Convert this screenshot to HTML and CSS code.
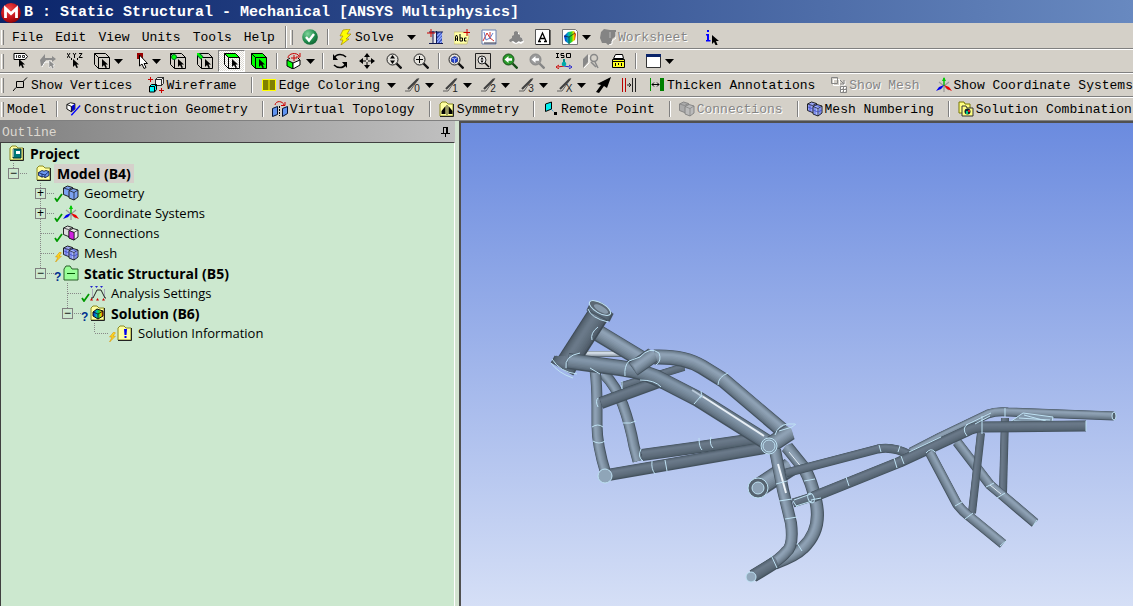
FILE: index.html
```html
<!DOCTYPE html>
<html lang="en">
<head>
<meta charset="utf-8">
<title>B : Static Structural - Mechanical [ANSYS Multiphysics]</title>
<link rel="stylesheet" href="styles.css">
</head>
<body>
<svg class="sprite" aria-hidden="true">
  <defs>
    <radialGradient id="red" cx=".4" cy=".3" r=".8"><stop offset="0" stop-color="#f04848"/><stop offset=".6" stop-color="#c01018"/><stop offset="1" stop-color="#700"/></radialGradient>
    <radialGradient id="grn" cx=".35" cy=".3" r=".8"><stop offset="0" stop-color="#7fd59a"/><stop offset=".6" stop-color="#1f8a4c"/><stop offset="1" stop-color="#0c5c2c"/></radialGradient>
    <linearGradient id="rain"><stop offset="0" stop-color="#0020e0"/><stop offset=".35" stop-color="#00b0c0"/><stop offset=".6" stop-color="#20d020"/><stop offset=".8" stop-color="#e8e000"/><stop offset="1" stop-color="#e00000"/></linearGradient>
  </defs>
  <symbol id="logo" viewBox="0 0 20 20"><circle cx="10" cy="10" r="10" fill="url(#red)"/><path d="M4.500 15V5.500l5.500 5 5.500-5V15" fill="none" stroke="#fff" stroke-width="2.800"/></symbol>
  <symbol id="check" viewBox="0 0 16 16"><circle cx="8" cy="8" r="7.800" fill="url(#grn)"/><path d="M4 8l3 3.500 5-6.500" fill="none" stroke="#fff" stroke-width="2.400"/></symbol>
  <symbol id="bolt" viewBox="0 0 16 16"><path d="M6 1l7-1-3 5h4L9 10h3L4 16l2-5H3l3-4H3z" fill="#ff0" stroke="#a88c00" stroke-width=".7"/></symbol>
  <symbol id="section" viewBox="0 0 16 16"><path d="M6 3h9v12H6z" fill="#3048b0"/><path d="M10 7l4-4M10 11l5-6M10 14l5-6M13 14l2-2" stroke="#90a8ff" stroke-width="1.300"/><path d="M6 3h3v11H6z" fill="#e8e8f0"/><path d="M6 2v13M9.500 2v13M2 3h14M2 14.500h14" fill="none" stroke="#101850"/><path d="M4 0v8M0 4h8" stroke="#c00"/></symbol>
  <symbol id="abc" viewBox="0 0 16 16"><path d="M0 3h12l3 4-2 8H0z" fill="#ffffa8" stroke="#b8b060" stroke-width=".6"/><path d="M1.500 12V8l1-2 1 2v4M1.500 10h2M6 5v7h2.500V9H6M12.500 9h-2v3h2" fill="none" stroke="#000"/><path d="M13 0v7M9.500 3.500H16" stroke="#c00"/></symbol>
  <symbol id="chart" viewBox="0 0 16 16"><path d="M1 1h14v14H1z" fill="#fff" stroke="#6880b0"/><path d="M2 12L6 4l3 5 4 3M9 3v7" fill="none" stroke="#d03030"/><path d="M3 3l2 8 4-2 3-5" fill="none" stroke="#6080d0"/><path d="M3 14h12" stroke="#334"/></symbol>
  <symbol id="cloud" viewBox="0 0 16 16"><path d="M9 3l2 1v3l3 2 2 4-3 2-2-1-3 1-3-1-2-3 3-3 2-1z" fill="#fff"/><path d="M8 2l2 1v2l2 1v2l2 1 1 3-3 1-1-1-3 2-3-2-3 1-1-2 3-2V7l2-1V3z" fill="#858585"/></symbol>
  <symbol id="lettera" viewBox="0 0 16 16"><path d="M.5.500h14v15H.5z" fill="#fff" stroke="#555"/><path d="M15 1v15H1" fill="none" stroke="#000"/><path d="M4 12L7.500 4 11 12M5 9.500h5M3 12.500h3M9 12.500h3" fill="none" stroke="#000" stroke-width="1.300"/></symbol>
  <symbol id="colors" viewBox="0 0 16 16"><path d="M.5.500h13l2 2v13H.5z" fill="#fff" stroke="#777"/><path d="M2 7l4-4 6-1 2 3-1 6-6 4-4-3z" fill="url(#rain)"/><path d="M2 7l5 1 6-4M7 8v7" fill="none" stroke="#123" stroke-width=".7"/></symbol>
  <symbol id="wsheet" viewBox="0 0 16 16"><path d="M1 3l3-3 6 1h6v6l-4 3v4l-4 2-2-2H2L0 9z" fill="#848484"/><path d="M16 3v6l-4 3v3l-3 1" fill="none" stroke="#fff"/><path d="M10 3v6" stroke="#bbb"/></symbol>
  <symbol id="info" viewBox="0 0 20 16"><path d="M8 1h2v2H8zM7 5h3v6h1.500v1.500H7V11h1V6.500H7z" fill="#00f"/><path d="M13 6v9l2-2 2 4h2l-2-5h3z" fill="#000"/></symbol>
  <symbol id="ptr" viewBox="0 0 16 16"><path d="M0 0v8l2-2 1.500 3L5 8.500 3.500 5.500H6z" fill="#000"/></symbol>
  <symbol id="tag" viewBox="0 0 16 16"><path d="M1 .5h11l2.500 3-2.500 3H1z" fill="#fff" stroke="#000"/><path d="M3.500 2v3M5.500 2.500h2v2h-2zM9.500 2.500h2v2h-2z" fill="none" stroke="#000" stroke-width=".8"/><use href="#ptr" x="6" y="6"/></symbol>
  <symbol id="probe" viewBox="0 0 16 16"><path d="M0 7l5-6v4h7V3l4 3-4 3V7H6l-3 6H1z" fill="#8c8c8c"/><path d="M2 14l3-5h7" fill="none" stroke="#fff"/><path d="M9 7v8l2-2 1 3 2-1-1-3h2z" fill="#8c8c8c" stroke="#fff" stroke-width=".5"/></symbol>
  <symbol id="xyz" viewBox="0 0 16 16"><path d="M0 0l3 5M3 0L0 5M4.500 5v2M6 0l1.500 2L9 0M7.500 2v3M10.500 5v2M12 .5h3L12 4.500h3.500" fill="none" stroke="#000"/><use href="#ptr" x="6" y="6"/></symbol>
  <symbol id="selbox" viewBox="0 0 16 16"><path d="M.5.500h11l4 4h-11z" fill="var(--top,none)"/><path d="M.5.500l4 4v11l-4-4z" fill="var(--side,none)"/><path d="M4.500 4.500h11v11h-11z" fill="var(--front,none)"/><path d="M.5.500h11l4 4v11h-11l-4-4zM.5.500l4 4h11M4.500 4.500v11" fill="none" stroke="#000"/><use href="#ptr" x="8" y="6"/></symbol>
  <symbol id="selvert" viewBox="0 0 16 16"><use href="#selbox"/><circle cx="4" cy="4" r="2.500" fill="#0f0" stroke="#063"/></symbol>
  <symbol id="seledge" viewBox="0 0 16 16"><use href="#selbox"/><path d="M0 0l5 5" stroke="#063" stroke-width="4"/><path d="M0 0l5 5" stroke="#0f0" stroke-width="2"/></symbol>
  <symbol id="redptr" viewBox="0 0 16 16"><path d="M5 0h6v6H5z" fill="#900"/><path d="M7.500 2v11l2.500-2 2 4.500 2-1-2-4h3.500z" fill="#fff" stroke="#000"/></symbol>
  <symbol id="view" viewBox="0 0 16 16"><path d="M1 7l6 3v6l-6-3z" fill="#0f0" stroke="#000"/><path d="M7 10l7-3v5l-7 4zM1 7l3-2M14 7l-2-2" fill="#fff" stroke="#000"/><path d="M2 5c0-5 9-6 11-2M14 0v4h-4M8 2v6M5 5h6" fill="none" stroke="#c00"/></symbol>
  <symbol id="rotate" viewBox="0 0 16 16"><path d="M2 5c3-5 9-4 12-1M14 11c-3 5-9 4-12 1" fill="none" stroke="#000" stroke-width="1.600"/><path d="M1 1v6h5zM15 15V9h-5z" fill="#000"/></symbol>
  <symbol id="pan" viewBox="0 0 16 16"><path d="M8 0l3 4H5zM8 16l3-4H5zM0 8l4-3v6zM16 8l-4-3v6z"/><path d="M8 3v4M8 9v4M3 8h4M9 8h4" stroke="#000"/></symbol>
  <symbol id="lens" viewBox="0 0 16 16"><circle cx="6.500" cy="6.500" r="5.500" fill="var(--glass,#e4e2dc)" stroke="var(--rim,#222)"/><path d="M10.500 10.500l5 5" stroke="var(--rim,#111)" stroke-width="2.400"/></symbol>
  <symbol id="zoomud" viewBox="0 0 16 16"><use href="#lens"/><path d="M6.500 2L9 5.500H4zM6.500 11L9 7.500H4z"/></symbol>
  <symbol id="zoomin" viewBox="0 0 16 16"><use href="#lens"/><path d="M6.500 3v7M3 6.500h7" stroke="#000"/></symbol>
  <symbol id="zoomfit" viewBox="0 0 16 16"><use href="#lens"/><path d="M3.500 5l3-1.500 3 1v4l-3 1.500-3-1.500z" fill="#2040d0" stroke="#001060" stroke-width=".6"/><path d="M3.500 5l3 1 3-1.500M6.500 6v4" fill="none" stroke="#fff" stroke-width=".6"/></symbol>
  <symbol id="zoombox" viewBox="0 0 16 16"><path d="M.5.500h15v15H.5z" fill="none" stroke="#222"/><circle cx="7" cy="7" r="4" fill="#eee" stroke="#222"/><path d="M10 10l4 4" stroke="#000" stroke-width="1.500"/><path d="M7 4l1.500 2.500h-3zM7 10l1.500-2.500h-3z"/></symbol>
  <symbol id="zoomarrow" viewBox="0 0 16 16"><use href="#lens"/><path d="M2.500 6.500l4-3.500v2.200H10v2.600H6.500V10z" fill="#fff"/></symbol>
  <symbol id="iso" viewBox="0 0 16 16"><path d="M1.500 0v5M0 .5h3M0 4.500h3M8 .5H5v2h3v2H5M10.500.500h4v4h-4z" fill="none" stroke="#000"/><path d="M8 6v6" stroke="#088" stroke-width="2"/><path d="M8 13l-6 1M3 12l-3 2 3 2" fill="none" stroke="#c00"/><path d="M8 13l6 1M13 12l3 2-3 2" fill="none" stroke="#22c"/><circle cx="8" cy="11" r="2.300" fill="#0aa"/></symbol>
  <symbol id="look" viewBox="0 0 16 16"><path d="M0 6l5-5v8l-5 6z" fill="#888"/><path d="M6 2v8l-5 5" fill="none" stroke="#fff"/><circle cx="11" cy="5" r="3.500" fill="none" stroke="#888" stroke-width="1.500"/><path d="M12 9l3 6M8 9l5 5" stroke="#888" stroke-width="1.500"/></symbol>
  <symbol id="ruler" viewBox="0 0 16 16"><path d="M5.500 1.500h7l1 4h-10z" fill="#fff" stroke="#000"/><path d="M2.500 6.500h12v8h-12z" fill="#ffff20" stroke="#000"/><path d="M3 8.500h11M5.500 10v3M8.500 10v2M11.500 10v3" stroke="#000"/></symbol>
  <symbol id="window" viewBox="0 0 16 16"><path d="M1.500 1.500h14v13h-14z" fill="#fff" stroke="#333"/><path d="M1 1h15v3H1z" fill="#0a246a"/></symbol>
  <symbol id="verts" viewBox="0 0 16 16"><path d="M3.500 4.500h7v6h-7zM10 4.500l4-4M3 10.500L0 14" fill="none" stroke="#000"/></symbol>
  <symbol id="wire" viewBox="0 0 16 16"><path d="M7.500 2.500l2-2h6v6l-2 2h-6zM7.500 2.500h6v6M13.500 2.500l2-2" fill="#eee" stroke="#000" stroke-width=".8"/><path d="M1.500 9.500l2-2h5v5l-2 2.500h-5z" fill="#0ff" stroke="#000"/><path d="M1.500 9.500h5v5.500M6.500 9.500l2-2" fill="none" stroke="#000"/><path d="M0 2.500h5M2.500 0v5M11 13.500h5M13.500 11v5" stroke="#c00"/></symbol>
  <symbol id="edgecol" viewBox="0 0 16 16"><path d="M1 2h14v12H1z" fill="#ff0"/><path d="M2 3h5.500v10H2zM8.500 3H14v10H8.500z" fill="#808000"/></symbol>
  <symbol id="pen" viewBox="0 0 16 16"><path d="M0 14h5L14 1" fill="none" stroke="#444" stroke-width=".8"/><path d="M3 12L13 2" stroke="#404040" stroke-width="2.200"/></symbol>
  <symbol id="arrowne" viewBox="0 0 16 16"><path d="M16 0l-4 11-3-2-5 7-3-1 5-7-4-1z"/></symbol>
  <symbol id="gap" viewBox="0 0 16 16"><path d="M.5 1v14M3.500 1v14" stroke="#b00"/><path d="M10.500 1v14M13.500 1v14M5 8h4M7 6l2 2-2 2" fill="none" stroke="#222"/></symbol>
  <symbol id="thick" viewBox="0 0 16 16"><path d="M1.500 1v13" stroke="#090"/><path d="M11 1h4v13h-4z" fill="#008000"/><path d="M3 7.500h7M5 5.500l-2 2 2 2M8 5.500l2 2-2 2" fill="none" stroke="#000"/></symbol>
  <symbol id="smesh" viewBox="0 0 16 16"><path d="M1.500 1.500h6v6h-6zM9.500 9.500h6v6h-6zM12.500 9.500v6M9.500 12.500h6M9 3l4 4M13 3v4H9" fill="none" stroke="#fff" transform="translate(1 1)"/><path d="M.5.500h6v6h-6zM9.500 9.500h6v6h-6zM12.500 9.500v6M9.500 12.500h6M9 3l4 4M13 3v4H9" fill="none" stroke="#858585"/></symbol>
  <symbol id="axes" viewBox="0 0 16 16"><path d="M3 5l10 8M13 5L4 12M8 9v6" stroke="#999" stroke-width="1.200"/><path d="M8 9V1" stroke="#0b0" stroke-width="1.400"/><path d="M8 0l2 4H6z" fill="#0c0"/><path d="M8 8l-3 4-5 2 3-4z" fill="#00e"/><path d="M8 8l3 4 5 2-3-4z" fill="#e00"/></symbol>
  <symbol id="cgeom" viewBox="0 0 18 16"><path d="M1 3l4-2 5 1v6l-4 3-5-3z" fill="#fff" stroke="#000"/><path d="M6 5l4-3v6l-4 3z" fill="#00c"/><path d="M1 3l5 2v6" fill="none" stroke="#000"/><path d="M6 15L16 4" stroke="#00f" stroke-width="1.500"/></symbol>
  <symbol id="vtopo" viewBox="0 0 16 16"><path d="M.5 7.500l5-2v8l-5 2zM10.500 7.500l5-2v7l-5 3z" fill="#5f92ee" stroke="#001030"/><path d="M7.500 5v10" stroke="#000" stroke-dasharray="2 1"/><path d="M3 4c1-5 8-4 9 0M13 1v3.500H9" fill="none" stroke="#c00"/></symbol>
  <symbol id="folder" viewBox="0 0 16 16"><path d="M1 3l2-2h4l2 2h5v12H1z" fill="#ffffa0" stroke="#8a8a20"/><path d="M14.500 3v12.500H1" fill="none" stroke="#222"/></symbol>
  <symbol id="symm" viewBox="0 0 16 16"><use href="#folder"/><path d="M6.500 5v8H2.500V10zM9.500 5v8h4V10z"/><path d="M8 4v10" stroke="#000" stroke-width=".8"/></symbol>
  <symbol id="remote" viewBox="0 0 16 16"><path d="M2.500 3l6-2v7l-6 2.500z" fill="#0ee" stroke="#000"/><path d="M8 8l4 4" stroke="#08c" stroke-dasharray="1 1"/><path d="M11 11h3v3h-3z"/></symbol>
  <symbol id="cubes" viewBox="0 0 16 16"><path d="M.5 3l4-2 5 1.500v7l-4 2-5-2z" fill="var(--a,#7ca2f2)" stroke="var(--ink,#111)" stroke-width=".9"/><path d="M6 5.500l4-2 5 1.500v7l-4 3-5-2z" fill="var(--b,#7ca2f2)" stroke="var(--ink,#111)" stroke-width=".9"/><path d="M6 5.500l5 2 4-2.500M11 7.500V15M.5 3l5 1.500 4-2" fill="none" stroke="var(--ink,#111)" stroke-width=".7"/></symbol>
  <symbol id="meshes" viewBox="0 0 16 16"><use href="#cubes"/><path d="M8 6v8M6 9l5 2 4-2M13 6v8M3 4v7M1 6l5 2M8 4l5 2" fill="none" stroke="#2838c0" stroke-width=".6"/></symbol>
  <symbol id="conns" viewBox="0 0 16 16"><use href="#cubes"/><path d="M6 5.500l5 2V15l-5-2z" fill="#d020e0" stroke="#111" stroke-width=".7"/></symbol>
  <symbol id="combo" viewBox="0 0 16 16"><path d="M1 1h5l1 2h5v9H1z" fill="#ffff80" stroke="#777700"/><path d="M4 5h4l1 2h6v8H4z" fill="#ffff80" stroke="#333"/><circle cx="9.500" cy="10.500" r="3" fill="#123"/><path d="M8 10h2v3H8z" fill="#0c8"/><path d="M10 9h2v2h-2z" fill="#e02020"/></symbol>
  <symbol id="book" viewBox="0 0 16 16"><use href="#folder"/><path d="M4 4h8v9H4z" fill="#007878" stroke="#033"/><path d="M7 6h4v3H7z" fill="#fff"/><path d="M3 5h2M3 7h2M3 9h2M3 11h2" stroke="#fff"/></symbol>
  <symbol id="fcube" viewBox="0 0 16 16"><use href="#folder"/><path d="M2.500 7.500l3.500-2 2 .7 2-.7 3 1v4l-3.500 2-2-.8-1.500.3-3.500-1.500z" fill="#6c98f0" stroke="#001040" stroke-width=".8"/><path d="M2.500 7.500L6 9l3 1 4-3.500M6 9v3.500M9 10v3" fill="none" stroke="#001040" stroke-width=".7"/></symbol>
  <symbol id="fgreen" viewBox="0 0 16 16"><path d="M1 4l2-3h4l2 3h6v11H1z" fill="#9f9" stroke="#286028"/><path d="M4 8.500h8" stroke="#050"/></symbol>
  <symbol id="fsol" viewBox="0 0 16 16"><use href="#folder"/><path d="M3 7l4-3 6 2v5l-5 3-5-3z" fill="url(#rain)" stroke="#111"/><path d="M3 7l5 2 5-3M8 9v5" fill="none" stroke="#111" stroke-width=".8"/></symbol>
  <symbol id="finfo" viewBox="0 0 16 16"><use href="#folder"/><path d="M7 4h3l-.5 6h-2zM7.500 11h2v2h-2z" fill="#00e"/></symbol>
  <symbol id="settings" viewBox="0 0 16 16"><path d="M0 1h3L1.500 3zM5 1h3L6.500 3zM10 1h3l-1.500 2z" fill="#22c"/><path d="M2.500 4v9M14.500 4v9" stroke="#aab"/><path d="M1 13h2l4-8h4l4 8h1" fill="none" stroke="#222"/><path d="M0 15.500L1.500 13 3 15.500zM6 15.500L7.500 13 9 15.500zM12 15.500l1.500-2.500 1.500 2.500z" fill="#c00"/></symbol>
  <symbol id="tick" viewBox="0 0 9 10"><path d="M1 6l2 3 5-7" fill="none" stroke="#090" stroke-width="1.800"/></symbol>
  <symbol id="zap" viewBox="0 0 9 12"><path d="M6 0L1 6h3l-3 6 7-7H5l3-4z" fill="#ffd820" stroke="#d89000" stroke-width=".7"/></symbol>
  <symbol id="caret" viewBox="0 0 9 5"><path d="M0 0h9L4.500 5z"/></symbol>
  <symbol id="pin" viewBox="0 0 9 10"><path d="M2.500 0v6M2 .5h4M5.500 0v6M6.500 0v6M0 6.500h9M4.500 6v4" fill="none" stroke="#000"/></symbol>
</svg>

<header class="titlebar"><svg class="logo"><use href="#logo"/></svg><h1>B : Static Structural - Mechanical [ANSYS Multiphysics]</h1></header>

<div class="bar">
  <span class="grip"></span>
  <nav class="menus"><button>File</button><button>Edit</button><button>View</button><button>Units</button><button>Tools</button><button>Help</button></nav>
  <span class="edge"></span><span class="grip"></span>
  <button class="tool" aria-label="Status"><svg><use href="#check"/></svg></button>
  <span class="sep"></span>
  <button class="tool solve"><svg><use href="#bolt"/></svg>Solve<svg class="caret"><use href="#caret"/></svg></button>
  <button class="tool" aria-label="New section plane"><svg><use href="#section"/></svg></button>
  <button class="tool" aria-label="Label"><svg><use href="#abc"/></svg></button>
  <button class="tool" aria-label="Chart"><svg><use href="#chart"/></svg></button>
  <button class="tool" aria-label="Comment" disabled><svg><use href="#cloud"/></svg></button>
  <button class="tool" aria-label="Text"><svg><use href="#lettera"/></svg></button>
  <button class="tool drop" aria-label="Figure"><svg><use href="#colors"/></svg><svg class="caret"><use href="#caret"/></svg></button>
  <button class="tool" disabled><svg><use href="#wsheet"/></svg>Worksheet</button>
  <button class="tool" aria-label="Selection information"><svg class="wide"><use href="#info"/></svg></button>
</div>

<div class="bar">
  <span class="grip"></span>
  <button class="tool" aria-label="Label"><svg><use href="#tag"/></svg></button>
  <button class="tool" aria-label="Direction" disabled><svg><use href="#probe"/></svg></button>
  <button class="tool" aria-label="Hit point coordinates"><svg><use href="#xyz"/></svg></button>
  <button class="tool drop" aria-label="Select type"><svg><use href="#selbox"/></svg><svg class="caret"><use href="#caret"/></svg></button>
  <button class="tool drop" aria-label="Select mode"><svg><use href="#redptr"/></svg><svg class="caret"><use href="#caret"/></svg></button>
  <button class="tool" aria-label="Vertex"><svg><use href="#selvert"/></svg></button>
  <button class="tool" aria-label="Edge"><svg><use href="#seledge"/></svg></button>
  <button class="tool pressed" aria-label="Face" aria-pressed="true"><svg class="top"><use href="#selbox"/></svg></button>
  <button class="tool" aria-label="Body"><svg class="solid"><use href="#selbox"/></svg></button>
  <span class="sep"></span>
  <button class="tool drop" aria-label="Extend"><svg><use href="#view"/></svg><svg class="caret"><use href="#caret"/></svg></button>
  <span class="sep"></span>
  <button class="tool" aria-label="Rotate"><svg><use href="#rotate"/></svg></button>
  <button class="tool" aria-label="Pan"><svg><use href="#pan"/></svg></button>
  <button class="tool" aria-label="Zoom"><svg><use href="#zoomud"/></svg></button>
  <button class="tool" aria-label="Box zoom"><svg><use href="#zoomin"/></svg></button>
  <span class="sep"></span>
  <button class="tool" aria-label="Zoom to fit"><svg><use href="#zoomfit"/></svg></button>
  <button class="tool" aria-label="Magnifier"><svg><use href="#zoombox"/></svg></button>
  <button class="tool" aria-label="Previous view"><svg class="prev"><use href="#zoomarrow"/></svg></button>
  <button class="tool" aria-label="Next view" disabled><svg class="next"><use href="#zoomarrow"/></svg></button>
  <button class="tool" aria-label="Isometric view"><svg><use href="#iso"/></svg></button>
  <button class="tool" aria-label="Look at" disabled><svg><use href="#look"/></svg></button>
  <button class="tool" aria-label="Rescale"><svg><use href="#ruler"/></svg></button>
  <span class="sep"></span>
  <button class="tool drop" aria-label="Viewports"><svg><use href="#window"/></svg><svg class="caret"><use href="#caret"/></svg></button>
</div>

<div class="bar">
  <span class="grip"></span>
  <button class="tool text"><svg><use href="#verts"/></svg>Show Vertices</button>
  <button class="tool text"><svg><use href="#wire"/></svg>Wireframe</button>
  <span class="sep"></span>
  <button class="tool drop spread"><svg><use href="#edgecol"/></svg>Edge Coloring<svg class="caret"><use href="#caret"/></svg></button>
  <button class="tool drop pen"><svg><use href="#pen"/></svg><small>0</small><svg class="caret"><use href="#caret"/></svg></button>
  <button class="tool drop pen"><svg><use href="#pen"/></svg><small>1</small><svg class="caret"><use href="#caret"/></svg></button>
  <button class="tool drop pen"><svg><use href="#pen"/></svg><small>2</small><svg class="caret"><use href="#caret"/></svg></button>
  <button class="tool drop pen"><svg><use href="#pen"/></svg><small>3</small><svg class="caret"><use href="#caret"/></svg></button>
  <button class="tool drop pen"><svg><use href="#pen"/></svg><small>X</small><svg class="caret"><use href="#caret"/></svg></button>
  <button class="tool" aria-label="Edge direction"><svg><use href="#arrowne"/></svg></button>
  <button class="tool" aria-label="Gap"><svg><use href="#gap"/></svg></button>
  <button class="tool text"><svg><use href="#thick"/></svg>Thicken Annotations</button>
  <button class="tool text" disabled><svg><use href="#smesh"/></svg>Show Mesh</button>
  <button class="tool text"><svg><use href="#axes"/></svg>Show Coordinate Systems</button>
</div>

<div class="bar">
  <span class="grip"></span>
  <button class="tool model">Model</button>
  <span class="sep"></span>
  <button class="tool text"><svg><use href="#cgeom"/></svg>Construction Geometry</button>
  <span class="sep"></span>
  <button class="tool text"><svg><use href="#vtopo"/></svg>Virtual Topology</button>
  <span class="sep"></span>
  <button class="tool text"><svg><use href="#symm"/></svg>Symmetry</button>
  <span class="sep"></span>
  <button class="tool text"><svg><use href="#remote"/></svg>Remote Point</button>
  <span class="sep"></span>
  <button class="tool text" disabled><svg class="off"><use href="#cubes"/></svg>Connections</button>
  <span class="sep"></span>
  <button class="tool text"><svg class="mesh"><use href="#meshes"/></svg>Mesh Numbering</button>
  <span class="sep"></span>
  <button class="tool text"><svg><use href="#combo"/></svg>Solution Combination</button>
</div>

<main class="work">
  <aside class="outline">
    <header class="panel-head"><h2>Outline</h2><button class="pin" aria-label="Pin panel"><svg><use href="#pin"/></svg></button></header>
    <div class="tree">
      <div class="row root"><svg><use href="#book"/></svg><b>Project</b></div>
      <ul>
        <li><div class="row"><span class="twig start"><button aria-label="Collapse">−</button></span><span class="state"></span><svg><use href="#fcube"/></svg><b class="chosen">Model (B4)</b></div>
          <ul>
            <li class="row"><span class="twig"><button aria-label="Expand">+</button></span><svg class="state"><use href="#tick"/></svg><svg><use href="#cubes"/></svg><span>Geometry</span></li>
            <li class="row"><span class="twig"><button aria-label="Expand">+</button></span><svg class="state"><use href="#tick"/></svg><svg><use href="#axes"/></svg><span>Coordinate Systems</span></li>
            <li class="row"><span class="twig"></span><svg class="state"><use href="#tick"/></svg><svg class="conn"><use href="#conns"/></svg><span>Connections</span></li>
            <li class="row"><span class="twig"></span><svg class="state"><use href="#zap"/></svg><svg class="mesh"><use href="#meshes"/></svg><span>Mesh</span></li>
            <li><div class="row"><span class="twig last"><button aria-label="Collapse">−</button></span><span class="state">?</span><svg><use href="#fgreen"/></svg><b>Static Structural (B5)</b></div>
              <ul>
                <li class="row"><span class="twig"></span><svg class="state"><use href="#tick"/></svg><svg><use href="#settings"/></svg><span>Analysis Settings</span></li>
                <li><div class="row"><span class="twig last"><button aria-label="Collapse">−</button></span><span class="state">?</span><svg><use href="#fsol"/></svg><b>Solution (B6)</b></div>
                  <ul><li class="row"><span class="twig last"></span><svg class="state"><use href="#zap"/></svg><svg><use href="#finfo"/></svg><span>Solution Information</span></li></ul>
                </li>
              </ul>
            </li>
          </ul>
        </li>
      </ul>
    </div>
  </aside>
  <section class="viewport" aria-label="Geometry view"><svg id="frame" viewBox="461 123 672 483" preserveAspectRatio="xMidYMid meet"></svg></section>
</main>
<script src="frame.js"></script>
</body>
</html>
```
FILE: styles.css
```css
* { box-sizing: border-box; }
html, body { height: 100%; }
body {
  margin: 0;
  display: flex;
  flex-direction: column;
  overflow: hidden;
  background: #d4d0c8;
  color: #000;
  font-family: "Liberation Mono", "Courier New", monospace;
  font-size: 13px;
}
.sprite { position: absolute; width: 0; height: 0; }
h1, h2 { margin: 0; font-size: inherit; font-weight: inherit; }
button { border: 0; background: none; color: inherit; font: inherit; padding: 0; }
svg { flex: none; }

.titlebar {
  display: flex;
  align-items: center;
  gap: 3px;
  flex: none;
  height: 23px;
  padding: 2px 0 0 1px;
  background: linear-gradient(90deg, #0a246a, #6889c0);
  color: #fff;
}
.titlebar h1 { font-size: 15px; font-weight: bold; white-space: nowrap; }
.logo { width: 20px; height: 20px; }

.bar {
  display: flex;
  align-items: stretch;
  flex: none;
  height: 24px;
  overflow: hidden;
  white-space: nowrap;
  border-top: 1px solid #fff;
  border-bottom: 1px solid #808080;
}
.titlebar + .bar { height: 26px; padding-top: 2px; border-top-color: #d4d0c8; }
.grip {
  flex: none;
  width: 3px;
  margin: 4px 3px 3px 1px;
  border-right: 1px solid #808080;
  border-left: 1px solid #fff;
}
.edge { flex: none; width: 2px; margin-right: 2px; border-left: 1px solid #808080; border-right: 1px solid #fff; }
.menus { display: flex; gap: 12px; padding: 0 10px 0 5px; }
.sep {
  flex: none;
  width: 2px;
  margin: 3px 2px 3px 4px;
  border-left: 1px solid #808080;
  border-right: 1px solid #fff;
}
.tool {
  display: flex;
  flex: none;
  align-items: center;
  gap: 2px;
  padding: 0 5px 0 6px;
}
.tool svg { width: 16px; height: 16px; }
.tool svg.wide { width: 20px; }
.tool svg.caret { width: 9px; height: 5px; margin-left: 2px; }
.drop { padding-right: 3px; }
.text { padding-right: 10px; }
.text:last-child { padding-right: 0; }
.spread svg.caret { margin-left: 5px; }
.solve svg.caret { margin-left: 11px; }
.model { padding: 0 6px 0 0; }
.tool:disabled { color: #858585; text-shadow: 1px 1px #fff; }
.pressed {
  background: repeating-conic-gradient(#fff 0 25%, #dcd9d2 0 50%) 0 0 / 2px 2px;
  border: 1px solid;
  border-color: #808080 #fff #fff #808080;
  padding: 0 4px 0 5px;
}
.top { --top: #0f0; }
.solid { --top: #0f0; --side: #0f0; --front: #0f0; }
.prev { --glass: #2a9a2a; --rim: #174d17; }
.next { --glass: #999; --rim: #858585; }
.off { --a: #aaa; --b: #bbb; --ink: #808080; }
.mesh { --a: #9aa4f4; --b: #a8b8ff; }
.conn { --a: #ddd; --b: #eee; }
.pen small {
  width: 8px;
  margin: 7px 0 0 -10px;
  font: 10px "Liberation Sans", Arial, sans-serif;
  color: #222;
}

.work {
  display: grid;
  grid-template-columns: minmax(200px, 459px) minmax(0, 1fr);
  flex: 1;
  min-height: 0;
}
.outline {
  display: flex;
  flex-direction: column;
  padding-right: 4px;
  background: #d2e2d0;
}
.panel-head {
  display: flex;
  align-items: center;
  justify-content: space-between;
  height: 21px;
  padding: 1px 5px 0 2px;
  background: linear-gradient(90deg, #808080, #c0c0c0);
  color: #dcd8d0;
}
.pin svg { display: block; width: 9px; height: 10px; }
.tree {
  flex: 1;
  border-top: 1px solid #404040;
  border-right: 1px solid #fff;
  background: #cce8cf;
  box-shadow: inset 1px 0 #404040;
  font: 13px "Open Sans", "Noto Sans", sans-serif;
}
.tree ul { margin: 0; padding: 0; list-style: none; }
.tree ul ul { padding-left: 27px; }
.row { display: flex; align-items: center; height: 20px; white-space: nowrap; }
.row svg { width: 16px; height: 16px; }
.row b { font-size: 14px; }
.row b, .row > span:last-child { padding: 0 3px; margin-left: 2px; line-height: 19px; }
.root { padding-left: 9px; }
.chosen { background: #d5d0cb; }
.row .state {
  width: 9px;
  height: 10px;
  margin-top: 8px;
  color: #003090;
  font: bold 12px/10px "Liberation Sans", sans-serif;
}
.twig {
  display: flex;
  align-items: center;
  width: 27px;
  height: 20px;
  padding-left: 8px;
  background:
    repeating-linear-gradient(#888 0 1px, transparent 1px 2px) 13px 0 / 1px 100% no-repeat,
    repeating-linear-gradient(90deg, #888 0 1px, transparent 1px 2px) 14px 10px / 13px 1px no-repeat;
}
.twig.last, .twig.start { background-size: 1px 10px, 13px 1px; }
.twig button {
  width: 11px;
  height: 11px;
  border: 1px solid #808080;
  background: #cce8cf;
  font: 12px/9px "Liberation Sans", sans-serif;
}

.viewport {
  min-width: 0;
  min-height: 0;
  border-left: 2px solid #505050;
  border-top: 2px solid #505050;
  background: linear-gradient(#6b8bdf, #d5dff6);
}
#frame { display: block; width: 100%; height: 100%; }
```
FILE: frame.js
```js
const NS = "http://www.w3.org/2000/svg";
const frame = document.getElementById("frame");

function add(name, attrs) {
  const el = document.createElementNS(NS, name);
  for (const key in attrs) el.setAttribute(key, attrs[key]);
  frame.appendChild(el);
}

// A tube is a stack of ever thinner strokes that run from the shaded edge to the lit core.
function tube(d, width, opts = {}) {
  const dark = opts.dark || [68, 82, 94];
  const light = opts.light || [142, 161, 180];
  const steps = 8;
  for (let i = 0; i < steps; i++) {
    const t = i / (steps - 1);
    const rgb = dark.map((c, k) => Math.round(c + (light[k] - c) * Math.sqrt(t)));
    add("path", {
      d, fill: "none", stroke: `rgb(${rgb})`, "stroke-width": width * (1 - 0.85 * t),
      "stroke-linejoin": "round",
      transform: `translate(${(opts.dx || 0) * width * t} ${(opts.dy ?? -0.2) * width * t})`
    });
  }
}
const line = (d, color = "#bfe2f4", width = 1) =>
  add("path", { d, fill: "none", stroke: color, "stroke-width": width });

const DIM = [106, 121, 137];
const UP = { dx: 0.08, dy: -0.16 };

// rear tubes
tube("M604 374Q616 386 623 405Q630 424 634 446L638 461", 11, { dx: -0.15, dy: 0 });
tube("M622 386L684 367", 8, { light: DIM });
tube("M642 455L700 447L762 438", 12, { light: DIM });
tube("M583 354L645 354", 6, { light: [215, 225, 235] });
tube("M654 357Q684 356 702 367L723 380L782 430", 15, UP);
tube("M787 447L804 468Q812 482 816 502Q822 530 803 548Q795 556 775 563", 13, { dx: -0.1, dy: -0.1 });
line("M789 452L803 469", "#e6eef6", 1);
tube("M758 488L790 467", 19, { dx: -0.05 });
tube("M786 473L878 449Q893 446 910 455", 9, { light: DIM });
tube("M911 452L940 437L988 414Q996 411 1008 412L1114 416", 9);
tube("M1005 418L1003 493", 8, { light: DIM, dx: -0.2, dy: 0 });
tube("M957 442L990 485L1002 495L1035 523", 10, UP);
line("M990 485L1001 494", "#e0eaf2", 1);
add("path", { d: "M1007 424L1023 413L1053 417L1052 422L1020 424Z", fill: "#8297aa", stroke: "#bfe2f4" });
line("M1019 418L1050 420M1024 415L1046 421M1014 421L1030 422", "#bfe2f4");

// front tubes
tube("M595 369Q597 385 597 405L597 425Q597 445 606 474", 11, { dx: -0.15, dy: 0 });
tube("M601 403L664 380", 12, { light: DIM });
tube("M608 475L770 447", 12, { light: DIM });
tube("M598 333L646 362", 17, UP);
tube("M600 312L564 368", 22, { light: DIM, dark: [62, 74, 85], dx: -0.1, dy: -0.05 });
tube("M602 308L598 316M566 362L562 369", 26, { light: DIM });
tube("M568 361L620 368Q645 371 665 382L698 399L768 443", 16, { ...UP, light: [130, 149, 168] });
line("M702 396L764 436", "#e8eff6", 2);
line("M692 390L703 397", "#b8c8d8", 2);
tube("M633 369L653 355", 16, UP);
tube("M772 444L790 432", 17, UP);
tube("M775 450L783 490L791 523Q794 546 786 552Q780 560 753 576", 12, { dx: -0.15, dy: -0.05 });
tube("M776 562L753 576", 13, { light: DIM });
line("M778 464L786 493", "#eef4fa", 2);
tube("M813 497L900 462L967 431Q974 427 984 427L1086 426", 11, { light: DIM });
tube("M793 503L812 497", 9, { light: DIM });
tube("M981 433L972 513", 8, { light: DIM, dx: -0.2, dy: 0 });
tube("M930 453L957 504Q963 512 970 517L1003 544", 10, UP);

// open tube ends
const ring = (cx, cy, rx, ry, fill, turn = 0) =>
  add("ellipse", { cx, cy, rx, ry, fill, stroke: "#bfe2f4", transform: `rotate(${turn} ${cx} ${cy})` });
ring(600, 308, 12, 5, "#5c6975", 30);
add("ellipse", { cx: 601, cy: 309, rx: 8, ry: 3, fill: "#8799aa", transform: "rotate(30 601 309)" });
ring(769, 446, 8, 8, "#7c90a3");
ring(769, 446, 6, 6, "#8498ab");
ring(758, 488, 10, 10, "#56636f");
ring(758, 488, 6, 6, "#8ea2b5");
ring(605, 476, 7, 7, "#8fa5b8");
ring(751, 577, 5, 5, "#93a9bd");
ring(1114, 416, 2, 4, "#53616e");
ring(811, 498, 3, 5, "#66798a", -20);

// edges between bodies
line("M588 309Q591 318 608 322M552 359Q560 372 577 374M551 363Q558 373 573 378");
line("M592 340Q590 333 598 327M566 368Q564 356 580 353M625 376Q624 366 629 361L640 357Q650 346 659 353Q662 361 656 365");
line("M592 427Q598 423 603 427M593 441Q599 445 605 441M623 423Q631 424 636 421M590 368L600 374M598 398Q595 401 598 407M622 381V389");
line("M699 397Q703 400 701 391M694 404L701 396M718 385Q718 377 728 373M699 438Q699 447 702 450M711 437Q709 444 713 448M641 449Q637 457 643 461M652 461Q651 469 655 474M665 460L667 471");
line("M776 484L787 481M779 501L792 499M785 519L797 517M804 481L815 479M811 500L821 498M797 543L802 551M771 555L777 568");
line("M775 435Q778 425 788 424L795 424M779 431L792 427L796 424");
line("M879 445L881 452M900 446L898 452M894 458L897 468M901 456L904 464M846 477L849 486M909 452L941 437M968 424Q961 428 967 436M982 416V434M966 425L991 413M975 424L990 416M1005 408V417");
line("M926 453Q931 447 935 452M955 506L962 502M965 519L973 513M986 487L994 483M997 498L1005 493M1000 546L1006 541M1033 526L1037 520M1086 421V431M640 380Q655 380 661 387");
line("M794 500L811 494M796 506L812 501M793 501L797 507", "#bfe2f4");
```
